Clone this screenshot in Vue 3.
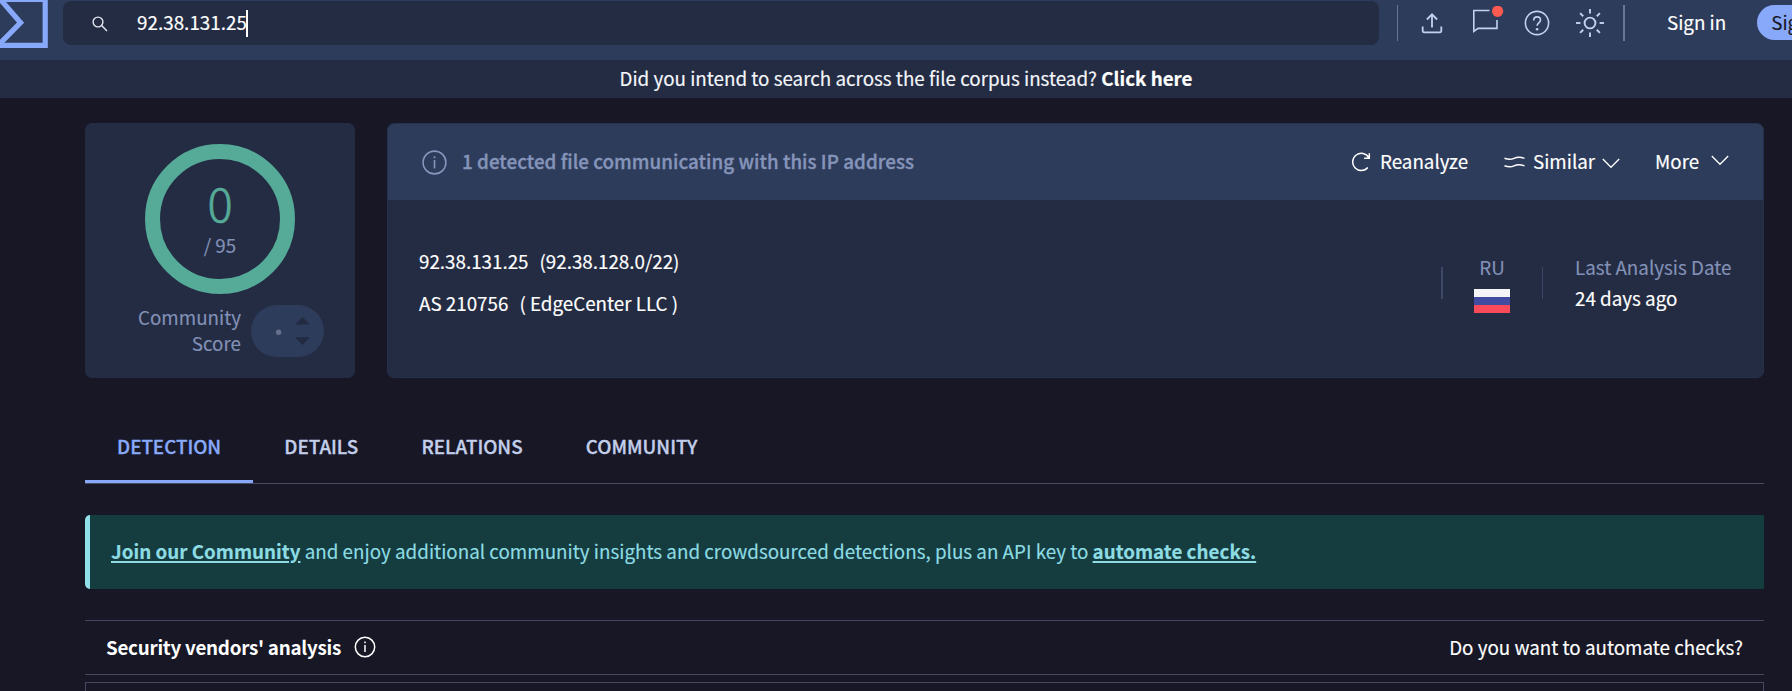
<script setup>
const tabs = ['DETECTION', 'DETAILS', 'RELATIONS', 'COMMUNITY']
const rays = [0, 45, 90, 135, 180, 225, 270, 315]
</script>

<template>
  <div class="page">
    <header class="topbar">
      <svg class="logo" width="48" height="48" viewBox="0 0 48 48" fill="none" stroke="#88a9fa" stroke-width="5.2">
        <path d="M-2 -.6H45.2V45.3H-2" />
        <path d="M-3 -4.5L20.6 22.7L-3 46.5" />
      </svg>
      <div class="search">
        <svg width="16" height="16" viewBox="0 0 16 16" fill="none" stroke="#e4e8f2" stroke-width="1.4">
          <circle cx="6" cy="6" r="4.9" /><path d="M9.6 9.6L15 15" />
        </svg>
        <span class="query">92.38.131.25</span><i class="caret"></i>
      </div>
      <i class="sep"></i>
      <div class="tools">
        <svg width="22" height="22" viewBox="0 0 22 22" fill="none" stroke="#c3d1f2" stroke-width="1.8">
          <path d="M1.7 14.5v4.6q0 1.2 1.2 1.2h16.2q1.2 0 1.2-1.2v-4.6M11 15.5V2.6M5.9 7.5L11 2.3l5.1 5.2" />
        </svg>
        <svg width="32" height="30" viewBox="0 0 32 30" fill="none" stroke="#c3d1f2" stroke-width="1.6">
          <path d="M17.5 4.5H1.8v21L6 22.4h19v-8.5" />
          <circle cx="25.6" cy="5.3" r="5.6" fill="#fb5a50" stroke="none" />
        </svg>
        <svg width="26" height="26" viewBox="0 0 26 26" fill="none" stroke="#c3d1f2" stroke-width="1.6">
          <circle cx="13" cy="13" r="11.6" />
          <path d="M9.7 10.4c0-2.2 1.4-3.5 3.4-3.5s3.4 1.2 3.4 3.1c0 2.8-3.4 2.9-3.4 5.7" />
          <circle cx="13.1" cy="19.2" r="1.3" fill="#c3d1f2" stroke="none" />
        </svg>
        <svg width="30" height="30" viewBox="0 0 30 30" fill="none" stroke="#c3d1f2" stroke-width="1.9">
          <circle cx="15" cy="15" r="5.4" />
          <path v-for="r in rays" :key="r" d="M15 5.4V1" :transform="`rotate(${r} 15 15)`" />
        </svg>
      </div>
      <i class="sep wide"></i>
      <a class="signin">Sign in</a>
      <a class="signup">Sign up</a>
    </header>
    <div class="notice">Did you intend to search across the file corpus instead? <b>Click here</b></div>

    <main>
      <section class="summary">
        <div class="score">
          <div class="ring"><span class="zero">0</span><span class="total">/ 95</span></div>
          <div class="community">
            <span class="label">Community<br>Score</span>
            <svg width="73" height="52" viewBox="0 0 73 52">
              <rect width="73" height="52" rx="26" fill="#2e3c5b" />
              <circle cx="27.6" cy="27.3" r="2.7" fill="#65708d" />
              <path d="M44 19.5L51.5 12L59 19.5ZM44 32.3L51.5 40L59 32.3Z" fill="#222b42" />
            </svg>
          </div>
        </div>
        <div class="report">
          <div class="report-head">
            <svg width="25" height="25" viewBox="0 0 25 25" fill="none" stroke="#8594ba" stroke-width="1.6">
              <circle cx="12.5" cy="12.5" r="11.4" /><path d="M12.5 10v8.5M12.5 6.2v2" />
            </svg>
            <span class="verdict">1 detected file communicating with this IP address</span>
            <a class="action reanalyze">
              <svg width="20" height="20" viewBox="0 0 20 20" fill="none" stroke="#fff" stroke-width="1.5">
                <path d="M16.8 15.6A8.6 8.6 0 1 1 17.8 5.8M18.3 1.2V6.3H13.1" />
              </svg>
              <span>Reanalyze</span>
            </a>
            <a class="action similar">
              <svg width="21" height="12" viewBox="0 0 21 12" fill="none" stroke="#fff" stroke-width="1.5">
                <path d="M.5 2.3C4 3.6 6.500 4 10 2.400S16 .8 20.500 2.400M.5 9.800C4 11.100 6.500 11.500 10 9.900S16 8.300 20.500 9.900" />
              </svg>
              <span>Similar</span>
              <svg class="chev" width="18" height="11" viewBox="0 0 18 11" fill="none" stroke="#fff" stroke-width="1.3"><path d="M.8 1L9 9.300L17.200 1" /></svg>
            </a>
            <a class="action more">
              <span>More</span>
              <svg class="chev" width="18" height="11" viewBox="0 0 18 11" fill="none" stroke="#fff" stroke-width="1.3"><path d="M.8 1L9 9.300L17.200 1" /></svg>
            </a>
          </div>
          <div class="report-body">
            <div class="address">
              <div><span>92.38.131.25</span><span>(92.38.128.0/22)</span></div>
              <div><span>AS 210756</span><span>( EdgeCenter LLC )</span></div>
            </div>
            <i class="rule"></i>
            <div class="country">
              <span>RU</span>
              <svg width="36" height="24" viewBox="0 0 36 24"><path d="M0 0h36v8H0z" fill="#f5f5f7" /><path d="M0 8h36v8H0z" fill="#414b9f" /><path d="M0 16h36v8H0z" fill="#fb4b5b" /></svg>
            </div>
            <i class="rule thin"></i>
            <div class="date"><span class="muted">Last Analysis Date</span><span>24 days ago</span></div>
          </div>
        </div>
      </section>

      <nav><a v-for="(t, i) in tabs" :key="t" :class="{ active: i === 0 }">{{ t }}</a></nav>

      <div class="join"><p><b>Join our Community</b> and enjoy additional community insights and crowdsourced detections, plus an API key to <b>automate checks.</b></p></div>

      <div class="vendors">
        <b>Security vendors' analysis</b>
        <svg width="22" height="22" viewBox="0 0 22 22" fill="none" stroke="#fff" stroke-width="1.5">
          <circle cx="11" cy="11" r="9.700" /><path d="M11 9v7M11 5.600v1.700" />
        </svg>
        <span>Do you want to automate checks?</span>
      </div>
      <div class="table"></div>
    </main>
  </div>
</template>

<style>
body { background: #171725; }
</style>
<style scoped>
.page { width: 1792px; height: 691px; overflow: hidden; background: #171725; color: #fff; font: 400 18.8px/28px "Noto Sans CJK SC", "Noto Sans", sans-serif; white-space: nowrap; -webkit-text-stroke-width: .15px; }
.page * { box-sizing: border-box; }
svg { display: block; flex: none; }
i { flex: none; }
.topbar { height: 60px; background: #2e3c5b; display: flex; align-items: flex-start; overflow: hidden; }
.search { flex: none; width: 1316px; height: 44px; margin: 1px 0 0 15px; background: #242c43; border-radius: 8px; display: flex; align-items: center; padding-left: 29px; }
.search svg { margin-top: 2px; }
.query { margin: -2px 0 0 29px; width: 109px; letter-spacing: .04px; }
.caret { width: 2px; height: 27px; background: #fff; }
.sep { width: 1px; height: 36px; margin: 5px 0 0 18px; background: #667799; }
.sep.wide { width: 2px; margin-left: 18px; }
.tools { display: flex; align-items: center; height: 46px; margin-left: 23px; }
.tools svg:nth-child(2) { margin: -5px 0 0 29px; }
.tools svg:nth-child(3) { margin-left: 20px; }
.tools svg:nth-child(4) { margin-left: 25px; }
.signin { width: 60px; margin: 8px 0 0 42px; }
.signup { flex: none; width: 95px; height: 35px; line-height: 34px; margin: 5px 0 0 31px; border-radius: 18px; background: #88a9fa; color: #171725; padding-left: 14px; }
.notice { height: 38px; line-height: 36px; background: #242c43; text-align: center; padding-left: 20px; color: #f4f6fb; }
.notice b { color: #fff; }
main { width: 1679px; margin: 25px 0 0 85px; }
.summary { display: flex; gap: 32px; height: 255px; }
.score { width: 270px; background: #242c43; border-radius: 7px; padding-top: 21px; }
.ring { width: 150px; height: 150px; margin: 0 auto; border: 15px solid #55ab98; border-radius: 50%; display: flex; flex-direction: column; align-items: center; }
.zero { font-size: 47px; font-weight: 300; line-height: 50px; margin-top: 18px; color: #55ab98; -webkit-text-stroke-width: .7px; }
.total { color: #8291b6; line-height: 28px; margin-top: 4px; }
.community { display: flex; margin-top: 11px; padding-left: 53px; color: #8291b6; }
.label { width: 103px; text-align: right; line-height: 26px; margin: -1px 10px 0 0; }
.report { width: 1377px; background: #242c43; border: 1px solid #26314b; border-radius: 7px; overflow: hidden; }
.report-head { height: 76px; background: #2e3c5b; display: flex; align-items: center; padding-left: 34px; }
.verdict { margin: -2px 0 0 15px; width: 455px; font-weight: 500; color: #8594ba; letter-spacing: .04px; -webkit-text-stroke-width: .35px; }
.action { display: flex; align-items: center; }
.action span { margin-top: -2px; }
.reanalyze { margin-left: 434px; width: 153px; }
.reanalyze span { margin-left: 9px; }
.similar { width: 151px; }
.similar span { margin-left: 8px; width: 64px; }
.chev { margin-left: 5px; margin-top: 2px; }
.more span { width: 44px; }
.more .chev { margin-left: 12px; margin-top: -3px; }
.report-body { display: flex; height: 177px; }
.address { width: 1022px; padding: 47px 0 0 31px; }
.address div { height: 42px; line-height: 28px; }
.address span + span { margin-left: 11px; }
.rule { width: 2px; height: 32px; margin: 67px 0 0 31px; background: #3b4765; }
.rule.thin { width: 1px; margin-left: 32px; }
.country { width: 36px; margin: 53px 0 0 31px; text-align: center; color: #8291b6; }
.country span { display: block; line-height: 28px; }
.country svg { margin-top: 8px; }
.date { margin: 53px 0 0 32px; display: flex; flex-direction: column; line-height: 33px; }
.date .muted { line-height: 28px; color: #8291b6; }
nav { height: 61px; margin-top: 45px; border-bottom: 1px solid #494c61; display: flex; font-weight: 500; color: #c3cfea; -webkit-text-stroke-width: .35px; }
nav a { height: 60px; line-height: 45px; padding: 0 32px; }
nav a + a { padding-left: 31.2px; }
nav a.active { color: #88a9fa; border-bottom: 3px solid #88a9fa; }
.join { height: 74px; margin-top: 31px; background: #153c3f; border-left: 5px solid #91dfe8; border-radius: 5px 0 0 5px; color: #8ddce4; padding-left: 21px; }
.join p { margin: 0; line-height: 72px; letter-spacing: .01px; }
.join b { text-decoration: underline; text-decoration-thickness: 2px; text-underline-offset: 2px; }
.vendors { height: 55px; margin-top: 31px; border: solid #44475d; border-width: 1px 0; display: flex; align-items: center; padding: 0 21px; }
.vendors b { letter-spacing: -.26px; margin-top: -2px; -webkit-text-stroke-width: 0; }
.vendors svg { margin: -2px 0 0 13px; }
.vendors span { margin: -2px 0 0 auto; }
.table { height: 40px; margin-top: 7px; border: 1px solid #44475d; }
</style>
